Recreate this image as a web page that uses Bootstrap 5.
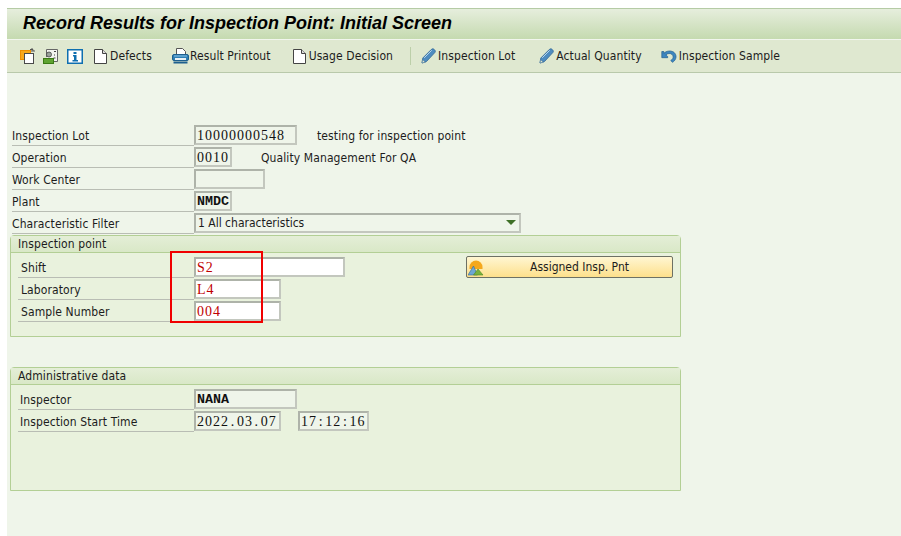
<!DOCTYPE html>
<html>
<head>
    <meta charset="UTF-8">
    <title>Record Results for Inspection Point: Initial Screen</title>
    <meta name="viewport" content="width=device-width, initial-scale=1">
    <link rel="stylesheet" href="https://cdn.jsdelivr.net/npm/bootstrap@5.3.3/dist/css/bootstrap.min.css">
    <style>
        html, body { height: 100%; margin: 0; background: #fff; overflow: hidden; }
        body { font-family: "DejaVu Sans Condensed", "Open Sans", sans-serif; font-size: 12px; letter-spacing: .1px; color: #1c1c1c; }

        .sap-shell { margin: 8px 0 0 7px; height: 528px; background: #eff5ea; }
        .sap-title {
            height: 31px; padding-left: 16px;
            border-top: 1px solid #b5cba5;
            background: linear-gradient(180deg, #e6eedd, #c5dab0);
            font-family: "Liberation Sans", sans-serif; font-size: 18px; font-weight: 700; font-style: italic; letter-spacing: 0; color: #000;
            line-height: 28px;
        }
        .sap-toolbar {
            height: 34px; padding-left: 13px;
            border-top: 1px solid #f2f6ee; border-bottom: 1px solid #b9c9ab;
            background: #dfe8d0;
        }
        .tool-item { display: flex; align-items: center; white-space: nowrap; }
        .tool-sep { width: 1px; height: 18px; background: #bccfa9; }
        .form-area { padding: 52px 0 0 5px; width: 674px; }

        .field-row { display: flex; height: 22px; }
        .field-label {
            width: 182px; height: 21px; line-height: 22px; flex: none;
            border-bottom: 1px solid #b9bdb4; white-space: nowrap;
        }
        .sap-field {
            height: 20px; line-height: 17px; padding: 0 0 0 1px; flex: none;
            border: 2px solid #aeb3a9; border-right-color: #c3c7be; border-bottom-color: #c3c7be;
            background: #eff5ea;
            font-family: "Liberation Serif", serif; font-size: 14px; letter-spacing: 1px; color: #111; white-space: nowrap;
        }
        .sap-field.entry { background: #fff; color: #c00000; }
        .sap-field.caps { font-family: "Liberation Mono", monospace; font-size: 13.33px; font-weight: 700; letter-spacing: 0; }
        .wide-sep { padding: 0 1.7px; }
        .w-s { width: 38px; }
        .w-m { width: 71px; }
        .w-l { width: 87px; }
        .w-xl { width: 103px; }
        .w-xxl { width: 151px; }
        .field-note { line-height: 22px; white-space: nowrap; }

        .sap-field.sap-select { width: 327px; line-height: 16px; font-family: inherit; font-size: 12px; letter-spacing: 0; padding-left: 2px; position: relative; color: #1c1c1c; }
        .sap-select::after {
            content: ""; position: absolute; right: 3px; top: 5px;
            border-left: 5px solid transparent; border-right: 5px solid transparent; border-top: 5px solid #3f7027;
        }

        .sap-group {
            margin-left: -2px; width: 671px;
            border: 1px solid #b3cf95; border-radius: 4px 4px 0 0; background: #e9f2dd;
        }
        .group-head {
            height: 17px; line-height: 16px; padding-left: 7px;
            border-bottom: 1px solid #b3cf95;
            background: linear-gradient(180deg, #e4eed7, #d9e8c7);
        }
        .group-body { position: relative; padding: 4px 0 0 7px; }
        .group-body .field-label { width: 176px; padding-left: 3px; }
        .group-inspection { height: 102px; }
        .group-admin { height: 124px; margin-top: 30px; }
        .group-admin .group-body .field-label { padding-left: 2px; }

        .red-frame { position: absolute; left: 159px; top: -2px; width: 93px; height: 72px; border: 2px solid #f00000; pointer-events: none; }
        .assign-btn {
            position: absolute; left: 455px; top: 3px; width: 207px; height: 22px; padding: 0;
            border: 1px solid #6d7164; border-radius: 2px;
            background: linear-gradient(180deg, #fff6d2, #fde08c);
            font-size: 12px; color: #1c1c1c; display: flex; align-items: center;
        }
        .assign-btn svg { margin-left: 1px; flex: none; }
        .assign-btn span { flex: 1; text-align: center; padding-left: 12px; padding-right: 9px; }
    </style>
</head>
<body>
<div class="sap-shell">
    <div class="sap-title">Record Results for Inspection Point: Initial Screen</div>

    <div class="sap-toolbar d-flex align-items-center">
        <svg width="16" height="16" viewBox="0 0 16 16"><rect x=".5" y="2.500" width="10" height="9" fill="#f7a81b" stroke="#ee8f00"/><rect x="4.500" y="5.500" width="9" height="10" fill="#fff" stroke="#4a4a4a"/><path d="M10 1.500h3v1.500h2M12 0v4" fill="none" stroke="#555"/></svg>
        <svg width="16" height="16" viewBox="0 0 16 16" style="margin-left:7px"><path d="M3.500 9V1.500h11v12H11" fill="#f3f5ef" stroke="#666"/><circle cx="6" cy="6.500" r="2.500" fill="#9aa39a" stroke="#444" stroke-width=".8"/><path d="M11 3.500h2M12 3v1M11 7h1M10.500 10h2" stroke="#444"/><rect x=".5" y="10.500" width="10" height="5" fill="#5fa331" stroke="#3a7a14"/></svg>
        <svg width="16" height="15" viewBox="0 0 16 15" style="margin-left:8px"><rect x=".75" y=".75" width="14.500" height="13.500" fill="#fff" stroke="#0f6fb0" stroke-width="1.500"/><path d="M6.500 3h3v2h-3zM6 6h3.500v5H11v1.500H5.500V11H7V7.500H6z" fill="#0f6fb0"/></svg>
        <div class="tool-item" style="margin-left:11px">
            <svg width="13" height="15" viewBox="0 0 13 15"><path d="M.5.500h8l4 4v10H.5z" fill="#fff" stroke="#444"/><path d="M8.500.500v4h4" fill="#ddd" stroke="#444"/></svg>
            <span style="margin-left:3px">Defects</span>
        </div>
        <div class="tool-item" style="margin-left:20px">
            <svg width="17" height="16" viewBox="0 0 17 16"><path d="M4.500.5h6l3 3v3h-9z" fill="#fff" stroke="#555"/><rect x=".5" y="6.500" width="16" height="6" rx="1.500" fill="#2f7fb5" stroke="#1d5f8e"/><path d="M2 8h13" stroke="#8cc4e6"/><rect x="3" y="10" width="11" height="2" fill="#e9f1f5"/><path d="M1.500 14.500h14" stroke="#1d5f8e" stroke-width="2"/></svg>
            <span style="margin-left:1px">Result Printout</span>
        </div>
        <div class="tool-item" style="margin-left:22px">
            <svg width="13" height="15" viewBox="0 0 13 15"><path d="M.5.500h8l4 4v10H.5z" fill="#fff" stroke="#444"/><path d="M8.500.500v4h4" fill="#ddd" stroke="#444"/></svg>
            <span style="margin-left:3px">Usage Decision</span>
        </div>
        <div class="tool-sep" style="margin-left:17px"></div>
        <div class="tool-item" style="margin-left:10px">
            <svg width="15" height="16" viewBox="0 0 15 16"><path d="M1 15l.8-5L10.500 1.300c.8-.7 1.800-.7 2.500 0l.8.800c.7.8.7 1.800 0 2.500L5.500 13.500z" fill="#4f8cc0" stroke="#2e6596" stroke-width=".8"/><path d="M3.200 9.800l7.500-7.500" stroke="#bcd8ee"/><path d="M1 15l.6-3.400 2.800 2.600z" fill="#dfe8d0" stroke="#2e6596" stroke-width=".5"/></svg>
            <span style="margin-left:2px">Inspection Lot</span>
        </div>
        <div class="tool-item" style="margin-left:24px">
            <svg width="15" height="16" viewBox="0 0 15 16"><path d="M1 15l.8-5L10.500 1.300c.8-.7 1.800-.7 2.500 0l.8.800c.7.8.7 1.800 0 2.500L5.500 13.500z" fill="#4f8cc0" stroke="#2e6596" stroke-width=".8"/><path d="M3.200 9.800l7.500-7.500" stroke="#bcd8ee"/><path d="M1 15l.6-3.400 2.800 2.600z" fill="#dfe8d0" stroke="#2e6596" stroke-width=".5"/></svg>
            <span style="margin-left:2px">Actual Quantity</span>
        </div>
        <div class="tool-item" style="margin-left:19px">
            <svg width="16" height="13" viewBox="0 0 16 13"><path d="M.8 1.500h2v1.800C5 1.200 8.500.300 11.500 1.500c3 1.300 4.200 4.500 3.200 7-.5 1.600-1.800 3-3.200 3.800l-1.800-1.800c1.500-.9 2.500-2 2.500-3.500 0-2-2-3.800-4.200-3.500-1.300.100-2.300.6-3.200 1.500l1.900 1.500v1.200H.8z" fill="#3d86c0" stroke="#235e8e" stroke-width=".7"/></svg>
            <span style="margin-left:2px">Inspection Sample</span>
        </div>
    </div>

    <div class="form-area">
        <div class="field-row">
            <div class="field-label">Inspection Lot</div>
            <div class="sap-field w-xl">10000000548</div>
            <div class="field-note ms-3 ps-1">testing for inspection point</div>
        </div>
        <div class="field-row">
            <div class="field-label">Operation</div>
            <div class="sap-field w-s">0010</div>
            <div class="field-note" style="margin-left:29px">Quality Management For QA</div>
        </div>
        <div class="field-row">
            <div class="field-label">Work Center</div>
            <div class="sap-field w-m"></div>
        </div>
        <div class="field-row">
            <div class="field-label">Plant</div>
            <div class="sap-field caps w-s">NMDC</div>
        </div>
        <div class="field-row">
            <div class="field-label">Characteristic Filter</div>
            <div class="sap-field sap-select">1 All characteristics</div>
        </div>

        <div class="sap-group group-inspection">
            <div class="group-head">Inspection point</div>
            <div class="group-body">
                <div class="field-row">
                    <div class="field-label">Shift</div>
                    <div class="sap-field entry w-xxl">S2</div>
                </div>
                <div class="field-row">
                    <div class="field-label">Laboratory</div>
                    <div class="sap-field entry w-l">L4</div>
                </div>
                <div class="field-row">
                    <div class="field-label">Sample Number</div>
                    <div class="sap-field entry w-l">004</div>
                </div>
                <div class="red-frame"></div>
                <button type="button" class="assign-btn">
                    <svg width="16" height="17" viewBox="0 0 16 17"><path d="M1.500 8a6.500 6.500 0 0 1 13 0v2h-13z" fill="#f5a81c"/><path d="M0 16l5.500-9 4 9z" fill="#6ea6d2" stroke="#2c6a9c" stroke-width=".6"/><path d="M5.500 16l4.500-6 5 6z" fill="#78b13f" stroke="#4d8a1f" stroke-width=".6"/></svg>
                    <span>Assigned Insp. Pnt</span>
                </button>
            </div>
        </div>

        <div class="sap-group group-admin">
            <div class="group-head">Administrative data</div>
            <div class="group-body">
                <div class="field-row">
                    <div class="field-label">Inspector</div>
                    <div class="sap-field caps w-xl">NANA</div>
                </div>
                <div class="field-row">
                    <div class="field-label">Inspection Start Time</div>
                    <div class="sap-field w-l">2022<span class="wide-sep">.</span>03<span class="wide-sep">.</span>07</div>
                    <div class="sap-field" style="width:71px;margin-left:17px">17<span class="wide-sep">:</span>12<span class="wide-sep">:</span>16</div>
                </div>
            </div>
        </div>
    </div>
</div>
<script src="https://cdn.jsdelivr.net/npm/bootstrap@5.3.3/dist/js/bootstrap.bundle.min.js"></script>
</body>
</html>
